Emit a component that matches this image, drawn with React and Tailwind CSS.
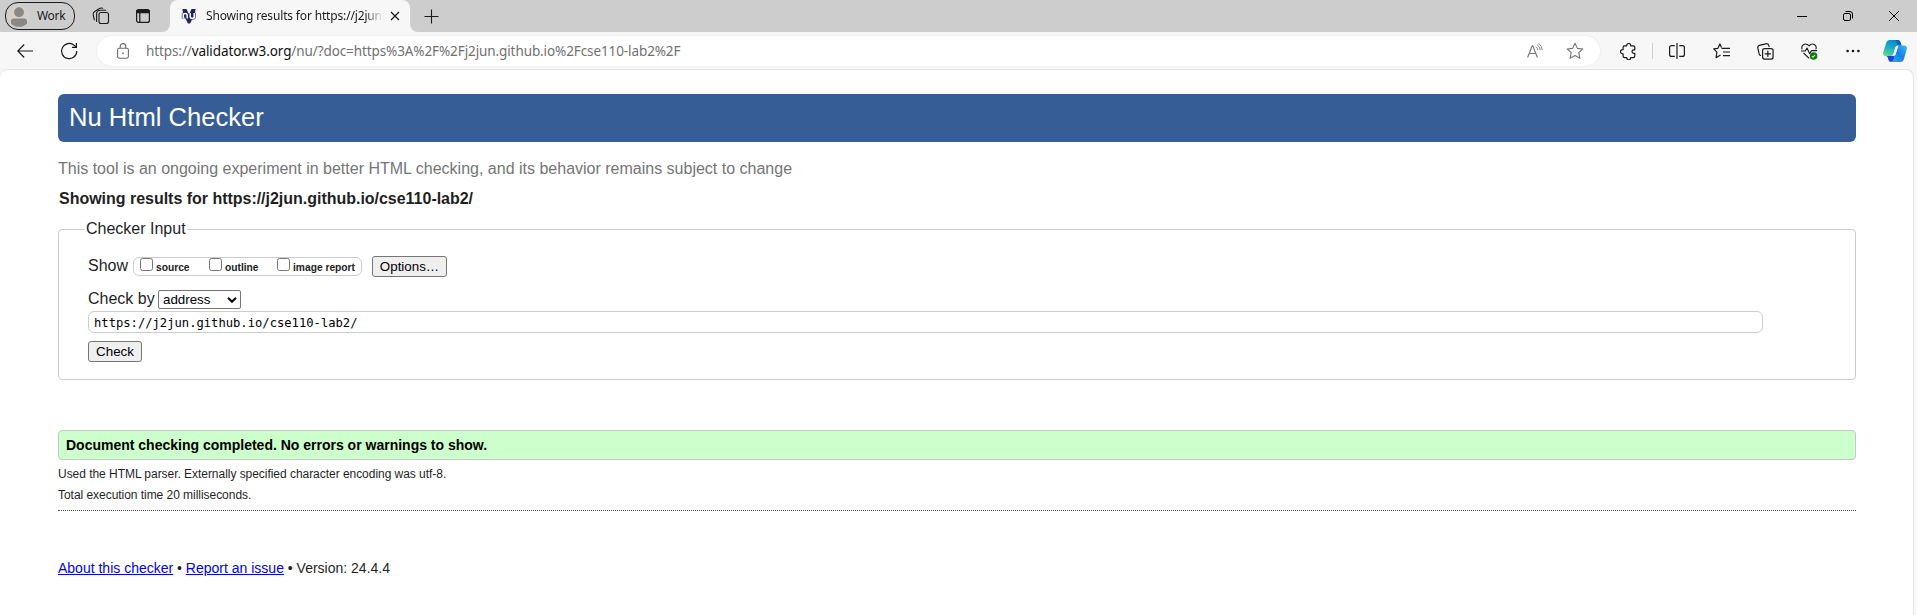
import React from "react";

const Icon = ({ size = 20, children, className = "" }) => (
  <svg
    width={size}
    height={size}
    viewBox="0 0 20 20"
    fill="none"
    stroke="currentColor"
    strokeWidth="1.1"
    strokeLinecap="round"
    strokeLinejoin="round"
    className={"shrink-0 " + className}
  >
    {children}
  </svg>
);

const ToolButton = ({ children }) => (
  <div className="flex h-[38px] w-11 shrink-0 items-center justify-center text-[#1b1b1b]">{children}</div>
);

const TitleBar = () => (
  <div className="flex h-8 items-start bg-[#cdcdcd]">
    <div className="mt-[2px] ml-[5px] flex h-7 w-[70px] shrink-0 items-center rounded-[13px] border border-[#1b1b1b]">
      <svg width="22" height="22" viewBox="0 0 22 22" className="ml-[2px] shrink-0">
        <circle cx="11" cy="11" r="11" fill="#d3d0cb" />
        <circle cx="11" cy="7.2" r="4.9" fill="#8a8886" />
        <path d="M3 18.4v-2.2q0-2.7 2.7-2.7h10.6q2.7 0 2.7 2.7v2.2a11 11 0 0 1-16 0z" fill="#8a8886" />
      </svg>
      <span className="ml-[7px] text-[12px] leading-4 tracking-[-0.3px] text-[#1b1b1b]">Work</span>
    </div>
    <div className="ml-4 flex h-8 w-5 items-center justify-center text-[#1b1b1b]">
      <Icon size={20}>
        <rect x="8" y="6.5" width="9.500" height="11" rx="2" />
        <path d="M5.600 15.500V8q0-3.800 3.800-3.800h5.300" />
        <path d="M3.300 13.800 2.200 8.600Q1.800 6.500 3.700 5.400L8.500 2.600q1.600-.9 3.200-.3" />
      </Icon>
    </div>
    <div className="ml-[22px] flex h-8 w-5 items-center justify-center text-[#1b1b1b]">
      <svg width="16" height="16" viewBox="0 0 16 16" fill="none" stroke="currentColor" strokeWidth="1.2">
        <rect x="1.600" y="1.600" width="12.800" height="12.800" rx="2" />
        <path d="M2 2.600h12v2H2z" fill="currentColor" />
        <path d="M4.800 5v9" />
      </svg>
    </div>
    <div className="ml-[9px] flex h-8 w-2 items-end bg-[#f7f7f7]">
      <div className="h-8 w-2 rounded-br-lg bg-[#cdcdcd]" />
    </div>
    <div className="flex h-8 w-[240px] shrink-0 items-center rounded-t-lg bg-[#f7f7f7]">
      <svg width="16" height="16" viewBox="0 0 16 16" className="ml-[11px] shrink-0">
        <path d="M1.500 1h4L8 6.500 10.500 1h4L14 6l-5 9.500H7L2 6z" fill="#22235c" />
        <path
          d="M2.200 10.500V5.200M2.200 7.500q0-1.900 2-1.900t2 1.900v3M9.200 5v3.500q0 1.900 2 1.900t2-1.900V5M13.200 5v5.500"
          stroke="#22235c"
          strokeWidth="2.800"
          fill="none"
        />
        <path
          d="M2.200 10.500V5.200M2.200 7.500q0-1.900 2-1.900t2 1.900v3M9.200 5v3.500q0 1.900 2 1.900t2-1.900V5M13.200 5v5.500"
          stroke="#fff"
          strokeWidth="1.500"
          fill="none"
        />
      </svg>
      <div className="ml-[9px] w-[177px] bg-linear-to-r from-[#1b1b1b] from-90% to-transparent bg-clip-text text-[12px] leading-5 tracking-[-0.16px] whitespace-nowrap text-transparent">
        Showing results for https://j2jun.
      </div>
      <svg width="10" height="10" viewBox="0 0 10 10" stroke="#1b1b1b" strokeWidth="1.300" className="ml-[7px] shrink-0">
        <path d="M1 1l8 8M9 1L1 9" />
      </svg>
    </div>
    <div className="h-8 w-2 bg-[#f7f7f7]">
      <div className="h-8 w-2 rounded-bl-lg bg-[#cdcdcd]" />
    </div>
    <div className="ml-[5px] flex h-8 w-4 items-center justify-center">
      <svg width="15" height="15" viewBox="0 0 15 15" stroke="#1b1b1b" strokeWidth="1.100">
        <path d="M7.500.5v14M.5 7.500h14" />
      </svg>
    </div>
    <div className="ml-auto flex h-8">
      <div className="flex w-[46px] items-center justify-center">
        <div className="h-px w-[10px] bg-black" />
      </div>
      <div className="flex w-[46px] items-center justify-center">
        <svg width="10" height="10" viewBox="0 0 10 10" fill="none" stroke="#000">
          <rect x=".5" y="2.500" width="7" height="7" rx="1.500" />
          <path d="M2.500.5H7Q9.500.5 9.500 3v4.500" />
        </svg>
      </div>
      <div className="flex w-[46px] items-center justify-center">
        <svg width="10" height="10" viewBox="0 0 10 10" stroke="#000">
          <path d="M0 0l10 10M10 0L0 10" />
        </svg>
      </div>
    </div>
  </div>
);

const Toolbar = () => (
  <div className="flex h-[38px] items-center bg-[#f7f7f7] pl-[3px]">
    <ToolButton>
      <svg width="16" height="14" viewBox="0 0 16 14" fill="none" stroke="currentColor" strokeWidth="1.200">
        <path d="M16 7H.8M7.200.5L.8 7l6.400 6.500" />
      </svg>
    </ToolButton>
    <ToolButton>
      <svg width="18" height="18" viewBox="0 0 18 18" fill="none" stroke="currentColor" strokeWidth="1.200">
        <path d="M16.800 9A7.600 7.600 0 1 1 14.300 3.400L16 5.200" />
        <path d="M16.400 1v4.400H12" />
      </svg>
    </ToolButton>
    <div className="ml-[6px] flex h-[30px] w-[1503px] shrink-0 items-center rounded-full bg-white shadow-[0_0_2px_rgba(0,0,0,0.1)]">
      <svg width="12" height="16" viewBox="0 0 12 16" fill="none" stroke="#6b6b6b" strokeWidth="1.100" className="ml-5 shrink-0">
        <rect x=".6" y="5.200" width="10.800" height="10" rx="1.600" />
        <path d="M3.200 5V3.400a2.800 2.800 0 0 1 5.600 0V5" />
        <rect x="5.200" y="9.500" width="1.600" height="1.600" fill="#6b6b6b" stroke="none" />
      </svg>
      <span className="ml-[17px] text-[13.5px] leading-5 tracking-[-0.1px] whitespace-nowrap text-[#717171]">
        https://<span className="text-[#111]">validator.w3.org</span>/nu/?doc=https%3A%2F%2Fj2jun.github.io%2Fcse110-lab2%2F
      </span>
      <svg width="16" height="16" viewBox="0 0 16 16" fill="none" stroke="#757575" strokeWidth="1.100" className="mr-[23px] ml-auto shrink-0">
        <path d="M.6 14.500L5.200 2.800h.6l4.600 11.700M2.200 10.500h6.600" />
        <path d="M8.800 3.600q1.900 1.200 2 3.600M10 1.600q3.200 2 3.300 5.600M11.500.3q3.600 2.500 3.800 6.900" strokeWidth=".9" />
      </svg>
      <svg width="18" height="18" viewBox="0 0 20 20" fill="none" stroke="#757575" strokeWidth="1.200" strokeLinejoin="round" className="mr-4 shrink-0">
        <path d="M10 1.500l2.600 5.600 6.100.7-4.500 4.100 1.200 6.100L10 15l-5.400 3 1.200-6.100-4.500-4.100 6.100-.7z" />
      </svg>
    </div>
    <div className="ml-[6px] flex w-11 shrink-0 justify-center text-[#1b1b1b]">
      <svg width="17" height="17" viewBox="0 0 17 17" fill="none" stroke="currentColor" strokeWidth="1.200" strokeLinejoin="round">
        <path d="M3.900 2.800H6.700V2.500a2 2 0 0 1 4 0v.3h2.500q1.600 0 1.600 1.600v2.400h-1a1.800 1.800 0 0 0 0 3.600h1V13q0 1.600-1.600 1.600h-2.500v.2a2 2 0 0 1-4 0v-.2H4.700q-1.600 0-1.600-1.600v-2.200h-.5a2 2 0 0 1 0-4.200h.5V4.400q0-1.600 1.600-1.600z" />
      </svg>
    </div>
    <div className="ml-[2px] h-4 w-px shrink-0 bg-[#cfcfcf]" />
    <div className="ml-[2px] flex">
      <ToolButton>
        <svg width="16" height="16" viewBox="0 0 16 16" fill="none" stroke="currentColor" strokeWidth="1.200">
          <path d="M5.800 2.600H2.600Q.6 2.600.6 4.600v6.800q0 2 2 2h3.200M10.200 2.600h3.200q2 0 2 2v6.800q0 2-2 2h-3.200" />
          <path d="M8 0v16" />
        </svg>
      </ToolButton>
      <ToolButton>
        <svg width="17" height="16" viewBox="0 0 17 16" fill="none" stroke="currentColor" strokeWidth="1.200" strokeLinejoin="round">
          <path d="M8.500 4.500L6.900.9 4.900 5.300.7 5.900l3.200 3.300-.8 5.500L7.500 12" />
          <path d="M8.500 5.300H17M10 9h7M10 12.600h7" />
        </svg>
      </ToolButton>
      <ToolButton>
        <svg width="17" height="17" viewBox="0 0 17 17" fill="none" stroke="currentColor" strokeWidth="1.200" strokeLinecap="round">
          <rect x="5.600" y="5.600" width="10.500" height="10.500" rx="2" />
          <path d="M10.850 8.200v5.300M8.200 10.850h5.300" />
          <path d="M3.500 12.500Q2.400 12 2.100 10.800L.8 5Q.4 3 2.300 2.400L8.900.8q2-.4 2.700 1.300l.5 1.500" />
        </svg>
      </ToolButton>
      <ToolButton>
        <svg width="17" height="17" viewBox="0 0 17 17" fill="none" stroke="currentColor" strokeWidth="1.100" strokeLinejoin="round">
          <path d="M1.200 6.400Q0 3.400 2.300 1.700 5.300-.2 8.100 2.800 10.700-.2 13.700 1.700 16 3.400 14.800 6.400" />
          <path d="M0 8h4.300L6 5l2.700 5.800L10.500 7.600H16M2.500 10l5.700 5.400" />
          <circle cx="12.600" cy="13" r="3.800" fill="#107c10" stroke="none" />
          <path d="M10.900 13.200l1.100 1 2-2.200" stroke="#dff6dd" />
        </svg>
      </ToolButton>
      <ToolButton>
        <svg width="14" height="4" viewBox="0 0 14 4" fill="#1b1b1b">
          <circle cx="1.600" cy="2" r="1.350" />
          <circle cx="7" cy="2" r="1.350" />
          <circle cx="12.400" cy="2" r="1.350" />
        </svg>
      </ToolButton>
    </div>
    <svg width="24" height="22" viewBox="0 0 24 22" className="ml-[8px] shrink-0">
      <defs>
        <linearGradient id="cpA" x1="0.600" y1="0" x2="0.200" y2="1">
          <stop offset="0" stopColor="#0a86d8" />
          <stop offset=".5" stopColor="#1fadc0" />
          <stop offset="1" stopColor="#63dd8c" />
        </linearGradient>
        <linearGradient id="cpB" x1="1" y1="0" x2="0" y2="1">
          <stop offset="0" stopColor="#2fc0f5" />
          <stop offset=".5" stopColor="#1a7fe6" />
          <stop offset="1" stopColor="#17b5f0" />
        </linearGradient>
      </defs>
      <path d="M6.500 0h8q2.300 0 3 2.200l1 3.300H15q-2 0-2.600 2l-2 6.500q-.7 2-2.500 2H2.800Q-.3 16 .2 12.500L3.300 2.500Q4 0 6.500 0z" fill="url(#cpA)" />
      <path d="M2.800 16H8q1.700 0 2.300-2l1.700 2-1.500 4q-.5 2-2.500 2-1.800 0-2.500-2L4.500 17q-.4-1-1.700-1z" fill="#1747d1" />
      <path d="M16 5.500h5q3.300 0 2.800 3.500l-3 10.500Q20 22 17.500 22H8.300q1.700-.3 2.400-2.500L14.500 7.500Q15 5.500 16 5.500z" fill="url(#cpB)" />
      <path d="M15 5.500h1.500Q15.300 5.800 14.700 7.700L12.700 14q-.6 2-2.500 2H7.800q1.900 0 2.600-2l2-6.500q.6-2 2.600-2z" fill="#fff" />
      <path d="M12.500 0h2q2.300 0 3 2.200l1 3.300H15q-1.100-.2-1.300-2Q13.500.8 12.500 0z" fill="#0b62b8" />
    </svg>
  </div>
);

const Check = ({ label, className }) => (
  <label className={"flex items-end " + className}>
    <span className="mb-[4px] h-[13px] w-[13px] rounded-[2.5px] border border-[#767676] bg-white" />
    <span className="ml-[3px] text-[10.24px] leading-[15px] font-bold text-[#222]">{label}</span>
  </label>
);

const buttonClass =
  "flex h-[21px] items-center justify-center rounded-[3px] border border-[#767676] bg-[#efefef] text-[13.333px] leading-[15px] text-black";

const CheckerPage = () => (
  <main className="-mt-px h-[546px] w-[1914px] rounded-t-[8px] border-t border-r border-[#e4e4e4] bg-white pr-[57px] pl-[58px] font-['Liberation_Sans',Arial,sans-serif] text-[16px] text-[#1f1f1f]">
    <h1 className="mt-[24px] flex h-12 items-center rounded-[6px] bg-[#365d95] pl-[11px] text-[25.6px] leading-8 text-white">
      <span className="-mt-[2px]">Nu Html Checker</span>
    </h1>
    <p className="mt-[17px] h-5 leading-5 text-[#757575]">
      This tool is an ongoing experiment in better HTML checking, and its behavior remains subject to change
    </p>
    <h2 className="mt-[10px] h-5 pl-px leading-5 font-bold tracking-[-0.02px]">
      Showing results for https://j2jun.github.io/cse110-lab2/
    </h2>
    <fieldset className="mt-[9px] h-[162px] rounded-[4px] border border-[#ccc] pl-[29px]">
      <legend className="-ml-[3px] h-[22px] px-px leading-[22px]">Checker Input</legend>
      <div className="mt-[16px] flex h-[21px] items-center">
        <span className="-mt-[2px] w-[45px] leading-5">Show</span>
        <div className="flex h-[19px] w-[229px] items-end rounded-[6px] border border-[#ccc] pl-[6px]">
          <Check label="source" className="w-[69px]" />
          <Check label="outline" className="w-[68px]" />
          <Check label="image report" className="whitespace-nowrap" />
        </div>
        <button className={buttonClass + " ml-[10px] w-[75px]"}>Options…</button>
      </div>
      <div className="mt-[13px] flex h-[19px] items-center">
        <span className="-mt-[2px] w-[70px] leading-5">Check by</span>
        <div className="flex h-[19px] w-[83px] items-center rounded-[2px] border border-[#767676] bg-white pr-[3px] pl-1 text-[13.333px] leading-[15px] text-black">
          <span>address</span>
          <svg width="10" height="6" viewBox="0 0 10 6" fill="none" stroke="#000" strokeWidth="2" className="ml-auto">
            <path d="M1 .8l4 4 4-4" />
          </svg>
        </div>
      </div>
      <div className="mt-[2px] flex h-[22px] w-[1675px] items-center rounded-[6px] border border-[#ccc] pt-[2px] pl-[5px] font-['DejaVu_Sans_Mono',monospace] text-[12.17px] leading-4 text-black">
        https://j2jun.github.io/cse110-lab2/
      </div>
      <button className={buttonClass + " mt-[8px] w-[54px]"}>Check</button>
    </fieldset>
    <div className="mt-[50px] flex h-[30px] items-center rounded-[4px] border border-[#c5c9c5] bg-[#ccffcc] pl-[7px] text-[14px] leading-5 font-bold text-black">
      Document checking completed. No errors or warnings to show.
    </div>
    <p className="mt-[6px] h-4 text-[12px] leading-4 tracking-[-0.04px]">
      Used the HTML parser. Externally specified character encoding was utf-8.
    </p>
    <p className="mt-[5px] h-4 text-[12px] leading-4 tracking-[-0.04px]">Total execution time 20 milliseconds.</p>
    <div className="mt-[7px] border-t border-dotted border-[#555]" />
    <p className="mt-[47px] text-[14px] leading-5">
      <a className="text-[#0000ee] underline">About this checker</a> •{" "}
      <a className="text-[#0000ee] underline">Report an issue</a> • Version: 24.4.4
    </p>
  </main>
);

export default function App() {
  return (
    <div className="h-[615px] w-[1917px] overflow-hidden bg-[#f7f7f7] font-['Noto_Sans','Open_Sans',sans-serif]">
      <TitleBar />
      <Toolbar />
      <CheckerPage />
    </div>
  );
}
